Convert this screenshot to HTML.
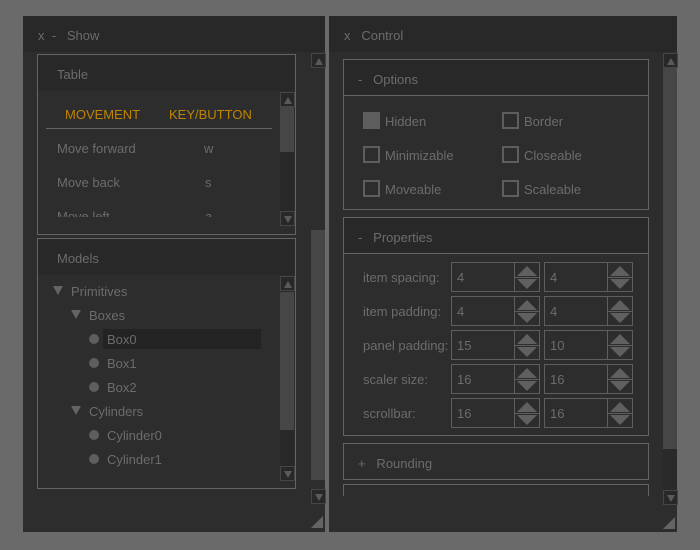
<!DOCTYPE html>
<html><head><style>
*{margin:0;padding:0;box-sizing:border-box}
body{width:700px;height:550px;background:#6a6a6a;position:relative;overflow:hidden;font-family:"Liberation Sans",sans-serif;font-size:13px;color:#6c6c6c}
.a{position:absolute}
.win{background:#2d2d2d}
.hdr{background:#282828}
.box{border:1px solid #646464}
.t{position:absolute;white-space:nowrap;line-height:14px}
.sb{position:absolute;background:#2a2a2a}
.btn{position:absolute;width:15px;height:15px;border:1px solid #464646;background:#282828}
.up::after,.dn::after{content:"";position:absolute;left:3px;border-left:4px solid transparent;border-right:4px solid transparent}
.up::after{top:4px;border-bottom:7px solid #5a5a5a}
.dn::after{top:4px;border-top:7px solid #5a5a5a}
.th{position:absolute;background:#464646}
.cb{position:absolute;width:17px;height:17px;border:2px solid #5e5e5e}
.sp{position:absolute;width:89px;height:30px;border:1px solid #5e5e5e}
.sp .d{position:absolute;left:62px;top:0;width:1px;height:28px;background:#5e5e5e}
.sp .m{position:absolute;left:63px;top:14px;width:24px;height:1px;background:#5e5e5e}
.sp .u{position:absolute;left:65px;top:3px;border-left:10px solid transparent;border-right:10px solid transparent;border-bottom:10px solid #606060}
.sp .w{position:absolute;left:65px;top:16px;border-left:10px solid transparent;border-right:10px solid transparent;border-top:10px solid #606060}
.sp span{position:absolute;left:5px;top:8px;line-height:14px}
.tri{position:absolute;border-left:5px solid transparent;border-right:5px solid transparent;border-top:9px solid #646464}
.dot{position:absolute;width:10px;height:10px;border-radius:50%;background:#5e5e5e}
.grip{position:absolute;width:0;height:0;border-left:12px solid transparent;border-bottom:12px solid #646464}
</style></head><body>

<div class="a win" style="left:23px;top:16px;width:302px;height:516px"></div>
<div class="a hdr" style="left:23px;top:16px;width:302px;height:36px"></div>
<div class="t" style="left:38px;top:29px">x &nbsp;- &nbsp;&nbsp;Show</div>
<div class="sb" style="left:311px;top:53px;width:14px;height:451px;background:#2d2d2d"></div>
<div class="th" style="left:311px;top:230px;width:14px;height:250px"></div>
<div class="btn up" style="left:311px;top:53px"></div>
<div class="btn dn" style="left:311px;top:489px"></div>
<div class="grip" style="left:311px;top:516px"></div>

<div class="a box" style="left:37px;top:54px;width:259px;height:181px"></div>
<div class="a hdr" style="left:38px;top:55px;width:257px;height:36px"></div>
<div class="t" style="left:57px;top:68px">Table</div>
<div class="th" style="left:280px;top:92px;width:14px;height:134px;background:#282828"></div>
<div class="th" style="left:280px;top:107px;width:14px;height:45px"></div>
<div class="btn up" style="left:280px;top:92px"></div>
<div class="btn dn" style="left:280px;top:211px"></div>
<div class="t" style="left:65px;top:108px;color:#c08400">MOVEMENT</div>
<div class="t" style="left:169px;top:108px;color:#c08400">KEY/BUTTON</div>
<div class="a" style="left:46px;top:128px;width:226px;height:1px;background:#646464"></div>
<div class="t" style="left:57px;top:142px">Move forward</div><div class="t" style="left:204px;top:142px">w</div>
<div class="t" style="left:57px;top:176px">Move back</div><div class="t" style="left:205px;top:176px">s</div>
<div class="a" style="left:38px;top:207px;width:240px;height:10px;overflow:hidden"><div class="t" style="left:19px;top:3px">Move left</div><div class="t" style="left:167px;top:3px">a</div></div>

<div class="a box" style="left:37px;top:238px;width:259px;height:251px"></div>
<div class="a hdr" style="left:38px;top:239px;width:257px;height:36px"></div>
<div class="t" style="left:57px;top:252px">Models</div>
<div class="th" style="left:280px;top:276px;width:14px;height:205px;background:#282828"></div>
<div class="th" style="left:280px;top:292px;width:14px;height:138px"></div>
<div class="btn up" style="left:280px;top:276px"></div>
<div class="btn dn" style="left:280px;top:466px"></div>
<div class="tri" style="left:53px;top:286px"></div><div class="t" style="left:71px;top:285px">Primitives</div>
<div class="tri" style="left:71px;top:310px"></div><div class="t" style="left:89px;top:309px">Boxes</div>
<div class="a" style="left:103px;top:329px;width:158px;height:20px;background:#232323"></div>
<div class="dot" style="left:89px;top:334px"></div><div class="t" style="left:107px;top:333px">Box0</div>
<div class="dot" style="left:89px;top:358px"></div><div class="t" style="left:107px;top:357px">Box1</div>
<div class="dot" style="left:89px;top:382px"></div><div class="t" style="left:107px;top:381px">Box2</div>
<div class="tri" style="left:71px;top:406px"></div><div class="t" style="left:89px;top:405px">Cylinders</div>
<div class="dot" style="left:89px;top:430px"></div><div class="t" style="left:107px;top:429px">Cylinder0</div>
<div class="dot" style="left:89px;top:454px"></div><div class="t" style="left:107px;top:453px">Cylinder1</div>

<div class="a win" style="left:329px;top:16px;width:348px;height:516px"></div>
<div class="a hdr" style="left:329px;top:16px;width:348px;height:36px"></div>
<div class="t" style="left:344px;top:29px">x &nbsp;&nbsp;Control</div>
<div class="sb" style="left:663px;top:53px;width:14px;height:452px;background:#2a2a2a"></div>
<div class="th" style="left:663px;top:68px;width:14px;height:381px"></div>
<div class="btn up" style="left:663px;top:53px"></div>
<div class="btn dn" style="left:663px;top:490px"></div>
<div class="grip" style="left:663px;top:517px"></div>

<div class="a box" style="left:343px;top:59px;width:306px;height:151px"></div>
<div class="a hdr" style="left:344px;top:60px;width:304px;height:35px"></div>
<div class="a" style="left:344px;top:95px;width:304px;height:1px;background:#646464"></div>
<div class="t" style="left:358px;top:73px">- &nbsp;&nbsp;Options</div>
<div class="cb" style="left:363px;top:112px;background:#5e5e5e"></div>
<div class="t" style="left:385px;top:115px">Hidden</div>
<div class="cb" style="left:502px;top:112px"></div><div class="t" style="left:524px;top:115px">Border</div>
<div class="cb" style="left:363px;top:146px"></div><div class="t" style="left:385px;top:149px">Minimizable</div>
<div class="cb" style="left:502px;top:146px"></div><div class="t" style="left:524px;top:149px">Closeable</div>
<div class="cb" style="left:363px;top:180px"></div><div class="t" style="left:385px;top:183px">Moveable</div>
<div class="cb" style="left:502px;top:180px"></div><div class="t" style="left:524px;top:183px">Scaleable</div>

<div class="a box" style="left:343px;top:217px;width:306px;height:219px"></div>
<div class="a hdr" style="left:344px;top:218px;width:304px;height:35px"></div>
<div class="a" style="left:344px;top:253px;width:304px;height:1px;background:#646464"></div>
<div class="t" style="left:358px;top:231px">- &nbsp;&nbsp;Properties</div>

<div class="t" style="left:363px;top:271px">item spacing:</div>
<div class="sp" style="left:451px;top:262px"><span>4</span><i class="d"></i><i class="m"></i><i class="u"></i><i class="w"></i></div>
<div class="sp" style="left:544px;top:262px"><span>4</span><i class="d"></i><i class="m"></i><i class="u"></i><i class="w"></i></div>
<div class="t" style="left:363px;top:305px">item padding:</div>
<div class="sp" style="left:451px;top:296px"><span>4</span><i class="d"></i><i class="m"></i><i class="u"></i><i class="w"></i></div>
<div class="sp" style="left:544px;top:296px"><span>4</span><i class="d"></i><i class="m"></i><i class="u"></i><i class="w"></i></div>
<div class="t" style="left:363px;top:339px">panel padding:</div>
<div class="sp" style="left:451px;top:330px"><span>15</span><i class="d"></i><i class="m"></i><i class="u"></i><i class="w"></i></div>
<div class="sp" style="left:544px;top:330px"><span>10</span><i class="d"></i><i class="m"></i><i class="u"></i><i class="w"></i></div>
<div class="t" style="left:363px;top:373px">scaler size:</div>
<div class="sp" style="left:451px;top:364px"><span>16</span><i class="d"></i><i class="m"></i><i class="u"></i><i class="w"></i></div>
<div class="sp" style="left:544px;top:364px"><span>16</span><i class="d"></i><i class="m"></i><i class="u"></i><i class="w"></i></div>
<div class="t" style="left:363px;top:407px">scrollbar:</div>
<div class="sp" style="left:451px;top:398px"><span>16</span><i class="d"></i><i class="m"></i><i class="u"></i><i class="w"></i></div>
<div class="sp" style="left:544px;top:398px"><span>16</span><i class="d"></i><i class="m"></i><i class="u"></i><i class="w"></i></div>

<div class="a box" style="left:343px;top:443px;width:306px;height:37px"></div>
<div class="t" style="left:358px;top:457px">+ &nbsp;&nbsp;Rounding</div>
<div class="a" style="left:343px;top:484px;width:306px;height:12px;border:1px solid #646464;border-bottom:none"></div>

</body></html>
